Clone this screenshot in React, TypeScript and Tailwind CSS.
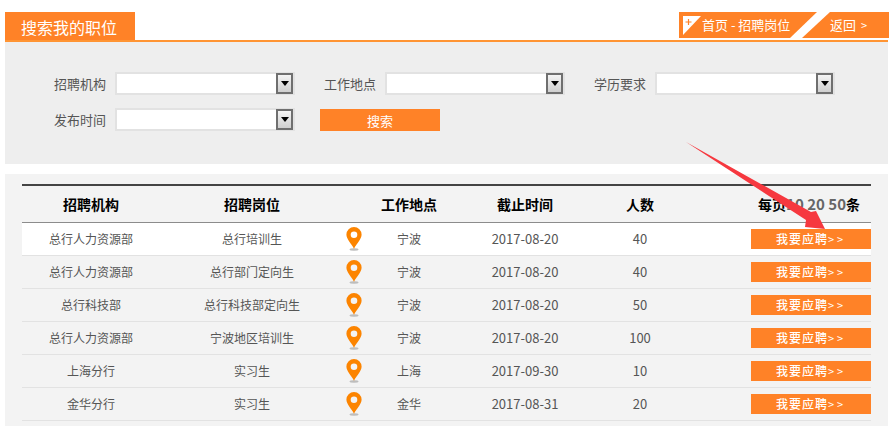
import React from 'react';

const rows = [
  ['总行人力资源部', '总行培训生', '宁波', '2017-08-20', '40'],
  ['总行人力资源部', '总行部门定向生', '宁波', '2017-08-20', '40'],
  ['总行科技部', '总行科技部定向生', '宁波', '2017-08-20', '50'],
  ['总行人力资源部', '宁波地区培训生', '宁波', '2017-08-20', '100'],
  ['上海分行', '实习生', '上海', '2017-09-30', '10'],
  ['金华分行', '实习生', '金华', '2017-08-31', '20'],
];

const gridCols = 'grid grid-cols-[138px_184px_20px_90px_142px_88px_1fr] items-center text-center';

const SelectBox = () => (
  <div className="w-[180px] h-[23px] bg-white border-2 border-[#e2e2e2] flex justify-end items-center">
    <div className="w-[17px] h-[21px] border-2 border-[#6f6f6f] bg-gradient-to-b from-[#f4f4f4] to-[#cfcfcf] flex items-center justify-center">
      <div className="w-0 h-0 border-x-[4px] border-x-transparent border-t-[5px] border-t-black" />
    </div>
  </div>
);

const Pin = () => (
  <svg width="16" height="24" viewBox="0 0 16 24" className="ml-[2px]">
    <ellipse cx="8" cy="22.5" rx="4.5" ry="1.2" fill="#bdbdbd" />
    <path fillRule="evenodd" d="M8 0a7.6 7.6 0 0 1 7.6 7.6c0 4.6-4.6 8.6-7.6 14.1C5 16.2.4 12.2.4 7.6A7.6 7.6 0 0 1 8 0Zm0 4.4a3.3 3.3 0 1 0 0 6.6 3.3 3.3 0 0 0 0-6.6Z" fill="#fc8400" />
  </svg>
);

export default function App() {
  return (
    <div className="relative w-[892px] h-[426px] overflow-hidden bg-white pl-[5px] pr-[4px] pt-[12px] text-[13px] text-[#555] font-['Noto_Sans_CJK_SC',sans-serif]">
      {/* title bar */}
      <div className="flex justify-between h-[28px]">
        <div className="w-[130px] h-[28px] bg-[#ff8227] text-white text-[16px] leading-[30px] pl-[16px]">搜索我的职位</div>
        <div className="flex h-[26px] bg-[#ff8227] text-white text-[13px] leading-[26px] -mr-[1px]">
          <div className="w-[111px] flex items-center pl-[4px] whitespace-nowrap">
            <svg width="19" height="19" viewBox="0 0 19 19" className="shrink-0">
              <path d="M0 0h18L0 19Z" fill="#fff" />
              <path d="M2.5 6h6M5.5 3v6" stroke="#ff8227" strokeWidth="1.2" />
            </svg>
            <span>首页 - 招聘岗位</span>
          </div>
          <svg width="40" height="26" viewBox="0 0 40 26" className="shrink-0">
            <path d="M27 0h13L12 26H0Z" fill="#fff" />
          </svg>
          <div className="w-[59px] whitespace-nowrap">返回 <span className="text-[11px] ml-[2px]">&gt;</span></div>
        </div>
      </div>
      <div className="h-[2px] bg-[#ff9433]" />

      {/* search form */}
      <div className="h-[122px] bg-[#eeeeee] pt-[30px]">
        <div className="flex items-center h-[23px]">
          <span className="ml-[49px] w-[61px]">招聘机构</span>
          <SelectBox />
          <span className="ml-[29px] w-[61px]">工作地点</span>
          <SelectBox />
          <span className="ml-[29px] w-[61px]">学历要求</span>
          <SelectBox />
        </div>
        <div className="flex items-center h-[23px] mt-[13px]">
          <span className="ml-[49px] w-[61px]">发布时间</span>
          <SelectBox />
          <div className="ml-[25px] w-[120px] h-[22px] bg-[#ff8227] text-white text-center leading-[23px]">搜索</div>
        </div>
      </div>

      {/* job list */}
      <div className="mt-[10px] h-[252px] bg-[#f3f3f3] pt-[10px] pl-[17px] pr-[17px]">
        <div className={`${gridCols} h-[39px] border-t-2 border-[#444] border-b border-b-[#8c8c8c] text-black font-bold text-[14px]`}>
          <div>招聘机构</div>
          <div>招聘岗位</div>
          <div />
          <div>工作地点</div>
          <div>截止时间</div>
          <div>人数</div>
          <div className="text-right pr-[11px] whitespace-nowrap">每页<span className="text-[#666] text-[15px]">10 20 50</span>条</div>
        </div>
        {rows.map((r, i) => (
          <div key={i} className={`${gridCols} h-[33px] border-b border-[#e2e2e2] text-[12px] ${i === 0 ? 'bg-white' : ''}`}>
            <div>{r[0]}</div>
            <div>{r[1]}</div>
            <Pin />
            <div>{r[2]}</div>
            <div className="text-[13px]">{r[3]}</div>
            <div className="text-[13px]">{r[4]}</div>
            <div className="flex justify-end">
              <div className="w-[120px] h-[20px] bg-[#ff8227] text-white text-[12px] font-medium leading-[20px] text-center whitespace-nowrap tracking-[1px]">我要应聘<span className="font-normal text-[11px] tracking-[3px]">&gt;&gt;</span></div>
            </div>
          </div>
        ))}
      </div>

      {/* red annotation arrow */}
      <svg className="absolute left-0 top-0 pointer-events-none" width="892" height="426" viewBox="0 0 892 426">
        <path d="M686 142 L811 212 L816 211 L825 229 L805 227 L806 220 Z" fill="#f6383f" />
      </svg>
    </div>
  );
}
